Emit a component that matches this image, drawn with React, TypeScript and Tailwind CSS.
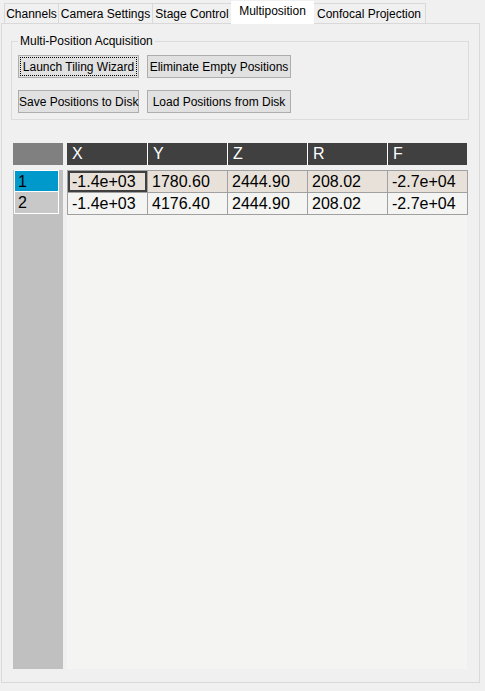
import React from "react";

const tabs = [
  { label: "Channels", w: "w-[55px]" },
  { label: "Camera Settings", w: "w-[95px]" },
  { label: "Stage Control", w: "w-[80px]" },
  { label: "Multiposition", w: "w-[83px]", active: true },
  { label: "Confocal Projection", w: "w-[114px]" },
];

const columns = ["X", "Y", "Z", "R", "F"];

const rows = [
  ["-1.4e+03", "1780.60", "2444.90", "208.02", "-2.7e+04"],
  ["-1.4e+03", "4176.40", "2444.90", "208.02", "-2.7e+04"],
];

function Button({ children, focused }: { children: React.ReactNode; focused?: boolean }) {
  return (
    <button
      className={`h-[23px] whitespace-nowrap border border-[#adadad] bg-[#e1e1e1] text-[12px] leading-none text-black ${
        focused ? "outline-1 outline-dotted outline-black -outline-offset-3" : ""
      }`}
    >
      {children}
    </button>
  );
}

export default function App() {
  return (
    <div className="w-[485px] h-[691px] bg-[#f0f0f0] font-['Liberation_Sans',Arial,sans-serif] text-[12px] text-black">
      {/* tab strip */}
      <div className="flex items-end h-[23px] pl-[4px]">
        {tabs.map((t) =>
          t.active ? (
            <div
              key={t.label}
              className={`${t.w} h-[23px] -mx-[1px] bg-white flex items-center justify-center pb-[3px] whitespace-nowrap relative z-10 -mb-[1px]`}
            >
              {t.label}
            </div>
          ) : (
            <div
              key={t.label}
              className={`${t.w} h-[20px] border border-b-0 border-[#d9d9d9] bg-[#f0f0f0] flex items-center justify-center whitespace-nowrap -ml-[1px] first:ml-0`}
            >
              {t.label}
            </div>
          )
        )}
      </div>

      {/* panel */}
      <div className="ml-[1px] w-[479px] h-[660px] border border-[#d9d9d9] bg-[#f0f0f0] pl-[9px] pt-[17px]">
        {/* group box */}
        <div className="relative w-[458px] h-[79px] border border-[#dcdcdc]">
          <span className="absolute -top-[9px] left-[6px] px-[2px] bg-[#f0f0f0] leading-[16px] whitespace-nowrap">
            Multi-Position Acquisition
          </span>
          <div className="grid grid-cols-[121px_144px] gap-x-[8px] gap-y-[12px] pt-[13px] pl-[6px]">
            <Button focused>Launch Tiling Wizard</Button>
            <Button>Eliminate Empty Positions</Button>
            <Button>Save Positions to Disk</Button>
            <Button>Load Positions from Disk</Button>
          </div>
        </div>

        {/* table */}
        <div className="mt-[23px] ml-[2px] text-[16px]">
          <div className="flex h-[22px]">
            <div className="w-[50px] bg-[#808080]" />
            <div className="ml-[4px] flex">
              {columns.map((c, i) => (
                <div
                  key={c}
                  className={`w-[80px] bg-[#404040] text-white pl-[5px] leading-[22px] ${
                    i > 0 ? "border-l border-white" : ""
                  }`}
                >
                  {c}
                </div>
              ))}
            </div>
          </div>

          <div className="flex mt-[5px]">
            <div className="w-[50px] h-[499px] bg-[#c0c0c0] pl-[1px]">
              {rows.map((_, i) => (
                <div
                  key={i}
                  className={`w-[45px] h-[22px] border border-white pl-[3px] leading-[21px] ${
                    i === 0 ? "bg-[#0099cc]" : "bg-[#c8c8c8] border-t-0"
                  }`}
                >
                  {i + 1}
                </div>
              ))}
            </div>
            <div className="ml-[4px] w-[400px] h-[499px] bg-[#f4f4f2]">
              <div className="border-l border-t border-[#a0a0a0] w-[401px]">
                {rows.map((r, i) => (
                  <div key={i} className={`flex h-[22px] ${i === 0 ? "bg-[#e8e1d9]" : "bg-[#f4f4f2]"}`}>
                    {r.map((v, j) => (
                      <div
                        key={j}
                        className={`w-[80px] border-r border-b border-[#a0a0a0] pl-[4px] leading-[21px] ${
                          i === 0 && j === 0 ? "shadow-[inset_0_0_0_2px_#404040]" : ""
                        }`}
                      >
                        {v}
                      </div>
                    ))}
                  </div>
                ))}
              </div>
            </div>
          </div>
        </div>
      </div>
    </div>
  );
}
